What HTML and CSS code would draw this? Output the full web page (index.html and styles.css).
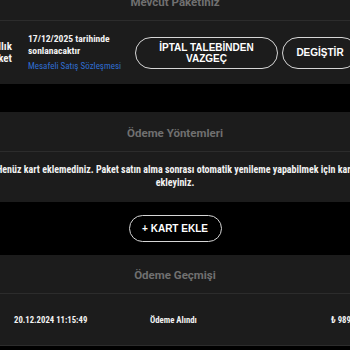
FILE: index.html
```html
<!DOCTYPE html>
<html lang="tr">
<head>
<meta charset="utf-8">
<title>Paketim</title>
<link rel="stylesheet" href="styles.css">
</head>
<body>
<div class="page">
  <section class="card card-current">
    <h2 class="card-title">Mevcut Paketiniz</h2>
    <div class="pkg">
      <div class="pkg-name">Yıllık Paket</div>
      <div class="pkg-info">
        <p class="pkg-date">17/12/2025 tarihinde sonlanacaktır</p>
        <a class="pkg-link" href="#">Mesafeli Satış Sözleşmesi</a>
      </div>
      <button class="btn btn-cancel">İPTAL TALEBİNDEN VAZGEÇ</button>
      <button class="btn btn-change">DEGİŞTİR</button>
    </div>
  </section>

  <section class="card card-methods">
    <h2 class="card-title">Ödeme Yöntemleri</h2>
    <p class="notice">Henüz kart eklemediniz. Paket satın alma sonrası otomatik yenileme yapabilmek için kart ekleyiniz.</p>
  </section>

  <div class="add-card">
    <button class="btn btn-add">+ KART EKLE</button>
  </div>

  <section class="card">
    <h2 class="card-title title-history">Ödeme Geçmişi</h2>
    <div class="history-row">
      <span class="h-date">20.12.2024 11:15:49</span>
      <span class="h-status">Ödeme Alındı</span>
      <span class="h-amount">₺ 989,99</span>
    </div>
  </section>
</div>
</body>
</html>
```

FILE: styles.css
```css
* { box-sizing: border-box; }

body {
  margin: 0;
  background: #000;
  overflow: hidden;
  font-family: "Roboto Condensed", "Liberation Sans Narrow", "Arial Narrow", "DejaVu Sans Condensed", sans-serif;
  color: #f2f2f2;
}

.page {
  width: 390px;
  margin-left: -20px;
  margin-top: -19px;
}

.card {
  background: #1c1c1c;
}

.card-current {
  margin-bottom: 28px;
}

.card-title {
  margin: 0;
  height: 40px;
  display: flex;
  align-items: center;
  justify-content: center;
  padding-top: 2px;
  border-bottom: 1px solid #2c2c2c;
  font-family: Roboto, "Liberation Sans", sans-serif;
  font-weight: 700;
  font-size: 11.5px;
  color: #707070;
}

.title-history { height: 39px; }

.pkg {
  height: 63px;
  display: flex;
  align-items: center;
}

.pkg-name {
  width: 32px;
  flex: none;
  text-align: right;
  font-weight: 700;
  font-size: 11px;
  line-height: 12px;
}

.pkg-info {
  width: 92px;
  flex: none;
  margin-left: 16px;
}

.pkg-date {
  margin: 0;
  width: 84px;
  font-weight: 700;
  font-size: 9.6px;
  line-height: 12px;
}

.pkg-link {
  display: block;
  margin-top: 4px;
  font-size: 9px;
  line-height: 11px;
  color: #2f6ed2;
  text-decoration: none;
  white-space: nowrap;
}

.btn {
  flex: none;
  display: flex;
  align-items: center;
  justify-content: center;
  background: transparent;
  color: #fff;
  border: 1.5px solid #d6d6d6;
  border-radius: 999px;
  font-family: "Liberation Sans", Arial, sans-serif;
  font-weight: 700;
  font-size: 10px;
  line-height: 11px;
  text-align: center;
  cursor: pointer;
}

.btn-cancel {
  width: 143px;
  height: 32px;
  margin-left: 15px;
  padding: 0 20px;
}

.btn-change {
  width: 76px;
  height: 32px;
  margin-left: 4px;
  padding: 0 10px;
}

.notice {
  margin: 0;
  padding: 11px 6px 13px;
  text-align: center;
  font-weight: 700;
  font-size: 10px;
  line-height: 13px;
}

.add-card {
  height: 53px;
  display: flex;
  align-items: center;
  justify-content: center;
}

.btn-add {
  width: 93px;
  height: 27px;
  padding: 0;
}

.history-row {
  height: 52px;
  display: grid;
  grid-template-columns: 136px 181px auto;
  align-items: center;
  padding-left: 34px;
  border-bottom: 1px solid #2c2c2c;
  font-weight: 700;
  font-size: 8.7px;
  white-space: nowrap;
}
```
